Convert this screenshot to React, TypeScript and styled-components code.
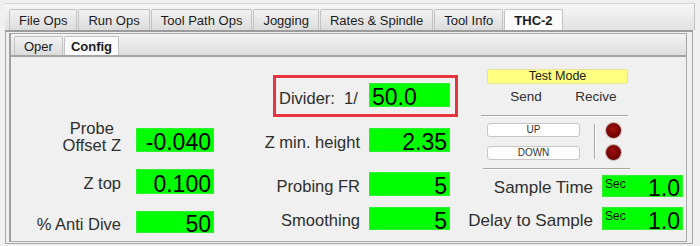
import styled, { createGlobalStyle, css } from 'styled-components'

const Global = createGlobalStyle`
  body {
    margin: 0;
    background: #f0f0f0;
    font-family: "Liberation Sans", Arial, sans-serif;
    color: #2a2a2a;
  }
`

const Frame = styled.div`
  margin: 3px 0 0 5px;
  width: 690px;
`

const TabBar = styled.div`
  height: 27px;
  box-sizing: border-box;
  display: flex;
  align-items: flex-end;
  padding-left: 4px;
  border-top: 1px solid #d4d4d4;
  border-right: 1px solid #c4c4c4;
  background: linear-gradient(#f6f6f6, #e2e2e2);
`

const tabLook = css<{ $active?: boolean }>`
  box-sizing: border-box;
  font-size: 13px;
  color: #1c1c1c;
  border: 1px solid #c2c2c2;
  border-bottom: none;
  border-radius: 2px 2px 0 0;
  display: flex;
  align-items: center;
  background: ${p => (p.$active ? '#fbfbfb' : 'linear-gradient(#f2f2f2, #dcdcdc)')};
  font-weight: ${p => (p.$active ? 'bold' : 'normal')};
`

const Tab = styled.div<{ $active?: boolean }>`
  ${tabLook}
  height: 21px;
  padding: 0 9px;
  margin-right: 1px;
`

const Panel = styled.div`
  width: 688px;
  box-sizing: border-box;
  border: 1px solid #a6a6a6;
  border-top: 2px solid #9c9c9c;
  padding: 1px 5px 1px 3px;
  background: #f0f0f0;
`

const Inner = styled.div`
  border: 1px solid #a8a8a8;
  border-left: 2px solid #a0a0a0;
`

const SubTabBar = styled.div`
  height: 23px;
  box-sizing: border-box;
  display: flex;
  align-items: flex-end;
  padding-left: 3px;
  background: linear-gradient(#f4f4f4, #dedede);
  border-bottom: 2px solid #a4a4a4;
`

const SubTab = styled.div<{ $active?: boolean }>`
  ${tabLook}
  height: 19px;
  padding: 0 ${p => (p.$active ? 6 : 9)}px;
  margin-right: 1px;
`

const Content = styled.div`
  height: 184px;
  display: flex;
  align-items: flex-start;
`

const Column = styled.div<{ $w: number; $ml?: number; $pt?: number }>`
  width: ${p => p.$w}px;
  margin-left: ${p => p.$ml ?? 0}px;
  padding-top: ${p => p.$pt ?? 0}px;
  display: flex;
  flex-direction: column;
`

const Row = styled.div<{ $mt?: number; $h?: number }>`
  display: flex;
  align-items: center;
  height: ${p => p.$h ?? 24}px;
  margin-top: ${p => p.$mt ?? 0}px;
`

const Label = styled.div<{ $w: number; $gap: number; $size?: number }>`
  width: ${p => p.$w}px;
  margin-right: ${p => p.$gap}px;
  text-align: right;
  white-space: nowrap;
  font-size: ${p => p.$size ?? 16.5}px;
  padding-top: 4px;
  color: #2e2e2e;
`

const StackLabel = styled.span`
  display: inline-block;
  text-align: center;
  line-height: 17px;
  margin-bottom: 10px;
`

const Field = styled.div<{ $w: number; $h?: number; $left?: boolean }>`
  width: ${p => p.$w}px;
  height: ${p => p.$h ?? 24}px;
  box-sizing: border-box;
  background: #00ff00;
  border: 1px solid #2ef22e;
  display: flex;
  align-items: flex-start;
  justify-content: ${p => (p.$left ? 'flex-start' : 'space-between')};
  padding: 0 2px;
  font-size: 23px;
  line-height: ${p => (p.$h ?? 24) + 3}px;
  color: #000;
`

const Unit = styled.span`
  font-size: 12px;
  line-height: 12px;
  margin-top: 2px;
  color: #111;
`

const Value = styled.span`
  margin-left: auto;
`

const DividerBox = styled.div`
  margin: 18px 0 0 10px;
  width: 185px;
  height: 42px;
  box-sizing: border-box;
  border: 3px solid #e8343c;
  display: flex;
  align-items: flex-start;
  padding: 5px 0 0 3px;
`

const DividerLabel = styled.div`
  width: 90px;
  font-size: 16.5px;
  padding-top: 6px;
  white-space: pre;
  color: #2e2e2e;
`

const ModeBar = styled.div`
  margin-left: 20px;
  width: 141px;
  height: 15px;
  box-sizing: border-box;
  background: #ffff80;
  border: 1px solid #e6e69a;
  border-radius: 2px;
  font-size: 12.5px;
  line-height: 13px;
  text-align: center;
  color: #222;
`

const ChannelRow = styled.div`
  display: flex;
  margin: 5px 0 0 24px;
  font-size: 13.5px;
  line-height: 16px;
  color: #2e2e2e;
`

const Channel = styled.span`
  width: 70px;
  text-align: center;
`

const Etch = styled.div<{ $mt: number; $ml: number }>`
  margin: ${p => p.$mt}px 0 0 ${p => p.$ml}px;
  width: 147px;
  height: 1px;
  background: #a8a8a8;
  border-bottom: 1px solid #ffffff;
`

const Controls = styled.div`
  display: flex;
  align-items: center;
  margin: 6px 0 0 20px;
`

const Stack = styled.div<{ $gap: number }>`
  display: flex;
  flex-direction: column;
  gap: ${p => p.$gap}px;
`

const SmallButton = styled.div`
  width: 93px;
  height: 14px;
  box-sizing: border-box;
  background: #ffffff;
  border: 1px solid #c6c6c6;
  border-radius: 3px;
  font-size: 10px;
  line-height: 12px;
  text-align: center;
  color: #333;
`

const VSep = styled.div`
  width: 1px;
  height: 35px;
  margin: 0 10px 0 14px;
  background: #a8a8a8;
  border-right: 1px solid #fff;
`

const Led = styled.div`
  width: 15px;
  height: 15px;
  border-radius: 50%;
  background: radial-gradient(circle at 45% 40%, #a01010, #6a0000 70%, #4a0000);
  box-shadow: 0 0 0 1px rgba(120, 60, 60, 0.35);
`

const outerTabs = ['File Ops', 'Run Ops', 'Tool Path Ops', 'Jogging', 'Rates & Spindle', 'Tool Info', 'THC-2']

const App = () => {
  return (
    <>
      <Global />
      <Frame>
        <TabBar>
          {outerTabs.map(t => (
            <Tab key={t} $active={t === 'THC-2'}>{t}</Tab>
          ))}
        </TabBar>
        <Panel>
          <Inner>
            <SubTabBar>
              <SubTab>Oper</SubTab>
              <SubTab $active>Config</SubTab>
            </SubTabBar>
            <Content>
              <Column $w={203} $pt={71}>
                <Row>
                  <Label $w={110} $gap={15}>
                    <StackLabel>Probe<br />Offset Z</StackLabel>
                  </Label>
                  <Field $w={78}><Value>-0.040</Value></Field>
                </Row>
                <Row $mt={17}>
                  <Label $w={110} $gap={15}>Z top</Label>
                  <Field $w={78} $h={25}><Value>0.100</Value></Field>
                </Row>
                <Row $mt={18} $h={22}>
                  <Label $w={110} $gap={15}>% Anti Dive</Label>
                  <Field $w={78} $h={22}><Value>50</Value></Field>
                </Row>
              </Column>

              <Column $w={195} $ml={49}>
                <DividerBox>
                  <DividerLabel>{'Divider:  1/'}</DividerLabel>
                  <Field $w={81} $left>50.0</Field>
                </DividerBox>
                <Row $mt={11}>
                  <Label $w={97} $gap={9}>Z min. height</Label>
                  <Field $w={81}><Value>2.35</Value></Field>
                </Row>
                <Row $mt={20}>
                  <Label $w={97} $gap={9}>Probing FR</Label>
                  <Field $w={81}><Value>5</Value></Field>
                </Row>
                <Row $mt={11} $h={23}>
                  <Label $w={97} $gap={9}>Smoothing</Label>
                  <Field $w={81} $h={23}><Value>5</Value></Field>
                </Row>
              </Column>

              <Column $w={216} $ml={9} $pt={12}>
                <ModeBar>Test Mode</ModeBar>
                <ChannelRow>
                  <Channel>Send</Channel>
                  <Channel>Recive</Channel>
                </ChannelRow>
                <Etch $mt={10} $ml={14} />
                <Controls>
                  <Stack $gap={9}>
                    <SmallButton>UP</SmallButton>
                    <SmallButton>DOWN</SmallButton>
                  </Stack>
                  <VSep />
                  <Stack $gap={7}>
                    <Led />
                    <Led />
                  </Stack>
                </Controls>
                <Etch $mt={8} $ml={16} />
                <Row $mt={5} $h={22}>
                  <Label $w={126} $gap={9} $size={17}>Sample Time</Label>
                  <Field $w={81} $h={22}><Unit>Sec</Unit><Value>1.0</Value></Field>
                </Row>
                <Row $mt={10} $h={23}>
                  <Label $w={126} $gap={9} $size={17}>Delay to Sample</Label>
                  <Field $w={81} $h={23}><Unit>Sec</Unit><Value>1.0</Value></Field>
                </Row>
              </Column>
            </Content>
          </Inner>
        </Panel>
      </Frame>
    </>
  )
}

export default App
